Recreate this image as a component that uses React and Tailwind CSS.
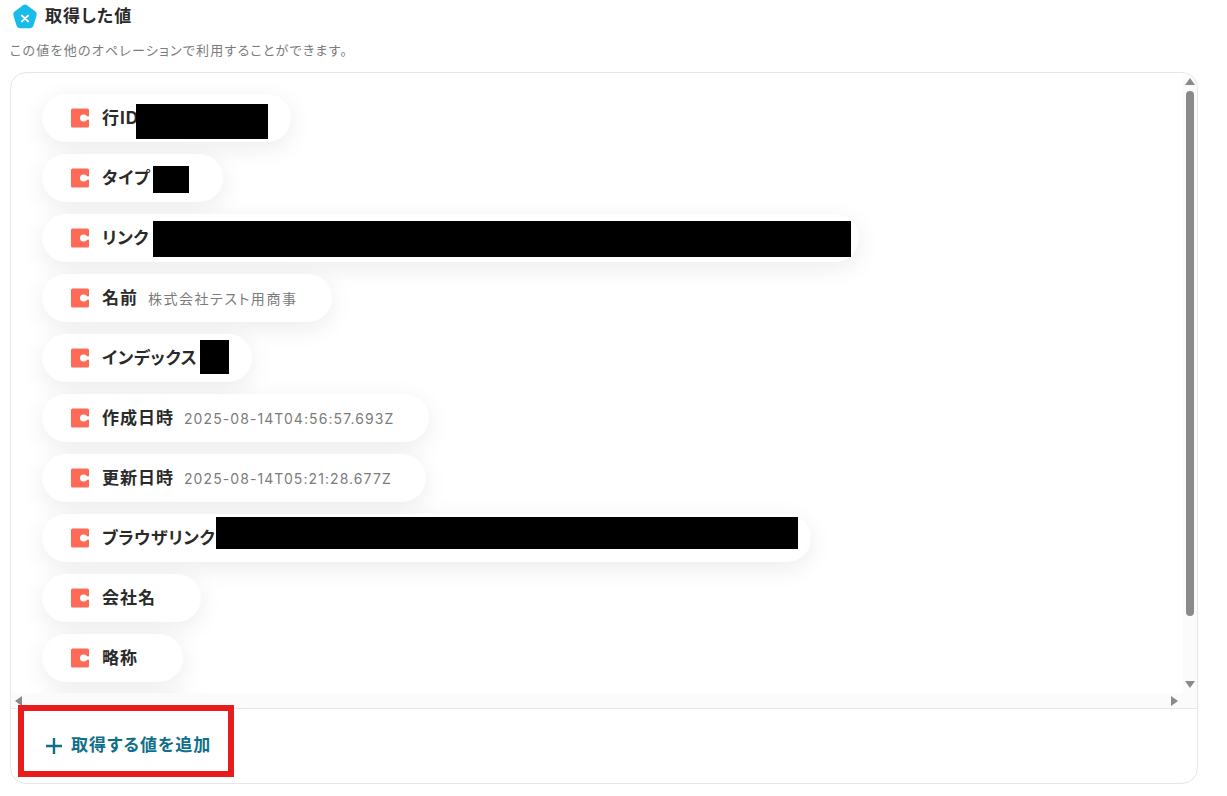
const ROWS = [
  { label: '行ID', pill: 'w-[249px]', box: 'w-[132px] h-[35px] ml-[-3px] mt-[7px]' },
  { label: 'タイプ', pill: 'w-[181px]', labelClass: 'tracking-[0.6px]', box: 'w-[36px] h-[27px] ml-[3px] mt-[3px]' },
  { label: 'リンク', pill: 'w-[817px]', labelClass: 'tracking-[0.6px]', box: 'w-[698px] h-[36px] ml-[4px] mt-[2px]' },
  { label: '名前', pill: 'w-[290px]', value: '株式会社テスト用商事', valueClass: 'tracking-[0.11em]' },
  { label: 'インデックス', pill: 'w-[210px]', labelClass: 'tracking-[0.6px]', box: 'w-[29px] h-[34px] ml-[3px] mb-[2px]' },
  { label: '作成日時', pill: 'w-[387px]', value: '2025-08-14T04:56:57.693Z', valueClass: 'tracking-[0.077em]' },
  { label: '更新日時', pill: 'w-[384px]', value: '2025-08-14T05:21:28.677Z', valueClass: 'tracking-[0.077em]' },
  { label: 'ブラウザリンク', pill: 'w-[769px]', labelClass: 'tracking-[0.5px]', box: 'w-[582px] h-[32px] ml-[1px] mb-[10px]' },
  { label: '会社名', pill: 'w-[159px]' },
  { label: '略称', pill: 'w-[141px]' },
  { label: '', pill: 'w-[159px]' },
];

function PieceIcon() {
  return (
    <svg width="18" height="20" viewBox="0 0 18 20" className="shrink-0">
      <rect x="0" y="0.4" width="18" height="19.2" rx="1.5" fill="#fd6b57" />
      <circle cx="12.6" cy="10" r="3.6" fill="#fff" />
      <rect x="14" y="8.3" width="4" height="3.4" fill="#fff" />
    </svg>
  );
}

function VariableIcon() {
  return (
    <svg width="26" height="26" viewBox="0 0 26 26" className="shrink-0">
      <path
        transform="translate(0 1) scale(1 1.04)"
        d="M11 1.2a3.4 3.4 0 0 1 4 0l8.4 6.1a3.4 3.4 0 0 1 1.2 3.8l-3.2 9.9a3.4 3.4 0 0 1-3.2 2.3H7.8a3.4 3.4 0 0 1-3.2-2.3L1.4 11.1a3.4 3.4 0 0 1 1.2-3.8Z"
        fill="#17bce8"
      />
      <path d="M9.8 12.5l6.4 6M16.2 12.5l-6.4 6" stroke="#fff" strokeWidth="1.8" strokeLinecap="round" />
    </svg>
  );
}

function Row({ row }) {
  return (
    <div className={`flex items-center h-12 shrink-0 rounded-full bg-white pl-[29px] shadow-[0_6px_24px_rgba(0,0,0,0.08)] ${row.pill}`}>
      <PieceIcon />
      <span className={`ml-[13px] mt-[2px] whitespace-nowrap text-[17px] font-bold text-[#2a2a2a] ${row.labelClass || 'tracking-[1px]'}`}>{row.label}</span>
      {row.box && <span className={`block shrink-0 bg-black ${row.box}`} />}
      {row.value && (
        <span className={`ml-[10px] mt-[2px] whitespace-nowrap text-sm text-[#7b7b7b] ${row.valueClass}`}>{row.value}</span>
      )}
    </div>
  );
}

export default function App() {
  return (
    <div className="relative w-[1227px] h-[796px] overflow-hidden bg-white font-['Inter','Noto_Sans_CJK_JP',sans-serif] [font-feature-settings:'palt']">
      {/* Title */}
      <div className="flex items-center gap-[7px] pl-3 pt-[3px] h-[29px]">
        <VariableIcon />
        <h2 className="mt-[2px] text-[17px] font-bold tracking-[1px] text-[#2a2a2a]">取得した値</h2>
      </div>
      <p className="ml-[10px] mt-[12px] text-[13px] leading-[18px] tracking-[0.095em] text-[#7b7b7b]">
        この値を他のオペレーションで利用することができます。
      </p>

      {/* Card */}
      <div className="ml-[10px] mt-[13px] flex h-[712px] w-[1188px] flex-col overflow-hidden rounded-2xl border border-[#e6e6e6]">
        <div className="flex h-[636px] shrink-0 flex-col border-b border-[#e6e6e6]">
          <div className="flex h-[620px] shrink-0">
            <div className="flex flex-1 flex-col gap-3 overflow-hidden pl-[31px] pt-[21px]">
              {ROWS.map((row, i) => (
                <Row key={i} row={row} />
              ))}
            </div>
            {/* Vertical scrollbar */}
            <div className="flex w-[14px] shrink-0 flex-col items-center bg-[#fbfbfb] pr-[1px]">
              <svg width="10" height="7" viewBox="0 0 10 7" className="mt-[5px]">
                <path d="M5 0l5 7H0Z" fill="#8a8a8a" />
              </svg>
              <div className="mt-[6px] h-[525px] w-2 rounded-full bg-[#8a8a8a]" />
              <svg width="10" height="7" viewBox="0 0 10 7" className="mt-[65px]">
                <path d="M5 7L10 0H0Z" fill="#8a8a8a" />
              </svg>
            </div>
          </div>
          {/* Horizontal scrollbar */}
          <div className="flex flex-1 items-center justify-between bg-[#fbfbfb] pl-[4px] pr-[19px]">
            <svg width="7" height="10" viewBox="0 0 7 10">
              <path d="M0 5l7-5v10Z" fill="#8a8a8a" />
            </svg>
            <svg width="7" height="10" viewBox="0 0 7 10">
              <path d="M7 5L0 0v10Z" fill="#8a8a8a" />
            </svg>
          </div>
        </div>
        <div className="flex flex-1 items-center gap-[9px] pl-[35px]">
          <svg width="16" height="16" viewBox="0 0 16 16">
            <path d="M8 0v16M0 8h16" stroke="#0f6f8a" strokeWidth="2.4" />
          </svg>
          <span className="text-[17px] font-bold tracking-[1px] text-[#0f6f8a]">取得する値を追加</span>
        </div>
      </div>

      {/* Red annotation */}
      <div className="absolute left-[18px] top-[705px] h-[72px] w-[216px] border-[6px] border-[#e81c1c]" />
    </div>
  );
}
